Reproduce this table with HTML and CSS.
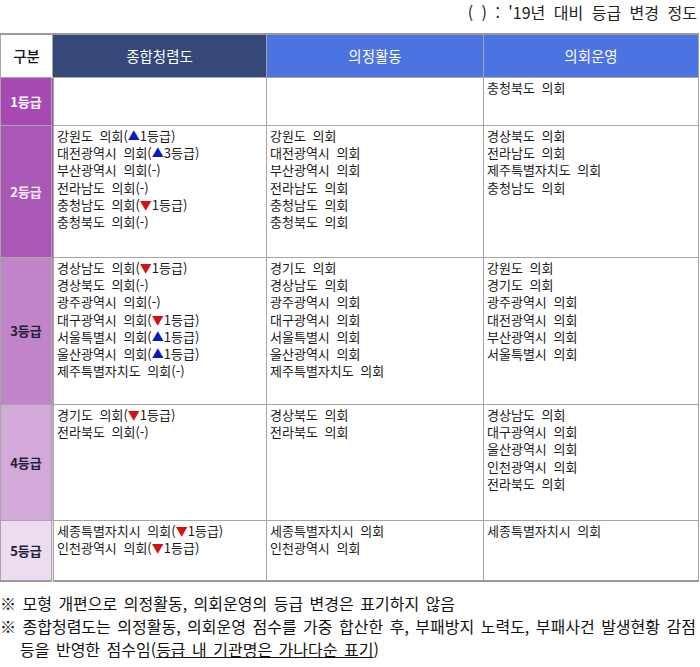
FILE: index.html
```
<!DOCTYPE html>
<html lang="ko">
<head>
<meta charset="utf-8">
<link rel="stylesheet" href="styles.css">
</head>
<body>
<div class="caption">( ) : '19년 대비 등급 변경 정도</div>
<table class="grade">
  <colgroup>
    <col class="c-label"><col class="c-a"><col class="c-b"><col class="c-c">
  </colgroup>
  <thead>
    <tr class="head">
      <th class="lab">구분</th>
      <th class="navy">종합청렴도</th>
      <th class="blue">의정활동</th>
      <th class="blue">의회운영</th>
    </tr>
  </thead>
  <tbody>
    <tr class="r1">
      <th class="g1">1등급</th>
      <td></td>
      <td></td>
      <td>충청북도 의회</td>
    </tr>
    <tr class="r2">
      <th class="g2">2등급</th>
      <td>강원도 의회(<span class="up">▲</span>1등급)<br>대전광역시 의회(<span class="up">▲</span>3등급)<br>부산광역시 의회(-)<br>전라남도 의회(-)<br>충청남도 의회(<span class="down">▼</span>1등급)<br>충청북도 의회(-)</td>
      <td>강원도 의회<br>대전광역시 의회<br>부산광역시 의회<br>전라남도 의회<br>충청남도 의회<br>충청북도 의회</td>
      <td>경상북도 의회<br>전라남도 의회<br>제주특별자치도 의회<br>충청남도 의회</td>
    </tr>
    <tr class="r3">
      <th class="g3">3등급</th>
      <td>경상남도 의회(<span class="down">▼</span>1등급)<br>경상북도 의회(-)<br>광주광역시 의회(-)<br>대구광역시 의회(<span class="down">▼</span>1등급)<br>서울특별시 의회(<span class="up">▲</span>1등급)<br>울산광역시 의회(<span class="up">▲</span>1등급)<br>제주특별자치도 의회(-)</td>
      <td>경기도 의회<br>경상남도 의회<br>광주광역시 의회<br>대구광역시 의회<br>서울특별시 의회<br>울산광역시 의회<br>제주특별자치도 의회</td>
      <td>강원도 의회<br>경기도 의회<br>광주광역시 의회<br>대전광역시 의회<br>부산광역시 의회<br>서울특별시 의회</td>
    </tr>
    <tr class="r4">
      <th class="g4">4등급</th>
      <td>경기도 의회(<span class="down">▼</span>1등급)<br>전라북도 의회(-)</td>
      <td>경상북도 의회<br>전라북도 의회</td>
      <td>경상남도 의회<br>대구광역시 의회<br>울산광역시 의회<br>인천광역시 의회<br>전라북도 의회</td>
    </tr>
    <tr class="r5">
      <th class="g5">5등급</th>
      <td>세종특별자치시 의회(<span class="down">▼</span>1등급)<br>인천광역시 의회(<span class="down">▼</span>1등급)</td>
      <td>세종특별자치시 의회<br>인천광역시 의회</td>
      <td>세종특별자치시 의회</td>
    </tr>
  </tbody>
</table>
<div class="notes">
  <p class="note">※ 모형 개편으로 의정활동, 의회운영의 등급 변경은 표기하지 않음</p>
  <p class="note">※ 종합청렴도는 의정활동, 의회운영 점수를 가중 합산한 후, 부패방지 노력도, 부패사건 발생현황 감점<br>등을 반영한 점수임(<span class="ul">등급 내 기관명은 가나다순 표기</span>)</p>
</div>
</body>
</html>
```
FILE: styles.css
```
html, body {
  margin: 0;
  padding: 0;
  background: #ffffff;
}
body {
  width: 700px;
  font-family: "Noto Sans CJK KR", "Noto Sans", sans-serif;
  color: #1a1a1a;
}
.caption {
  height: 33px;
  box-sizing: border-box;
  padding: 1px 3px 0 0;
  text-align: right;
  font-size: 16px;
  line-height: 22px;
  color: #222;
  word-spacing: 4px;
}
.grade {
  width: 698px;
  table-layout: fixed;
  border-collapse: collapse;
  font-size: 13px;
  line-height: 17.2px;
}
.c-label { width: 52px; }
.c-a { width: 214px; }
.c-b { width: 217px; }
.c-c { width: 215px; }
.grade th, .grade td {
  border: 1px solid #a6a6a6;
  padding: 0;
}
.grade thead th {
  border-top: 2px solid #9a9a9a;
  height: 42px;
  font-weight: normal;
  font-size: 14.5px;
  text-align: center;
  vertical-align: middle;
}
.grade .lab {
  background: #ffffff;
  color: #111;
  font-weight: 500;
}
.grade .navy {
  background: #34487a;
  color: #ffffff;
}
.grade .blue {
  background: #4b73e2;
  color: #ffffff;
}
.grade tbody th {
  font-weight: bold;
  font-size: 13px;
  text-align: center;
  vertical-align: middle;
  border-right: 3px double #a6a6a6;
  color: #1e1e3a;
}
.grade td {
  vertical-align: top;
  padding: 1px 0 0 3px;
  word-spacing: 3px;
  color: #1a1a1a;
}
.r1 { height: 48px; }
.r2 { height: 132px; }
.r3 { height: 147px; }
.r4 { height: 116px; }
.r5 { height: 60px; }
.r5 th, .r5 td { border-bottom: 2px solid #9a9a9a; }
.g1 { background: #a848b3; color: #ffffff !important; }
.g2 { background: #aa58b6; color: #fbe9fb !important; }
.g3 { background: #c184c9; }
.g4 { background: #d3a9d9; }
.g5 { background: #ecdcf0; }
.up { color: #0a1cc0; font-size: 12px; }
.down { color: #d41010; font-size: 12px; }
.notes {
  padding-top: 10px;
  font-size: 16px;
  line-height: 23px;
  color: #111;
}
.note {
  margin: 0;
  padding-left: 20px;
  text-indent: -20px;
  word-spacing: 2px;
  white-space: nowrap;
}
.ul {
  text-decoration: underline;
}
```
